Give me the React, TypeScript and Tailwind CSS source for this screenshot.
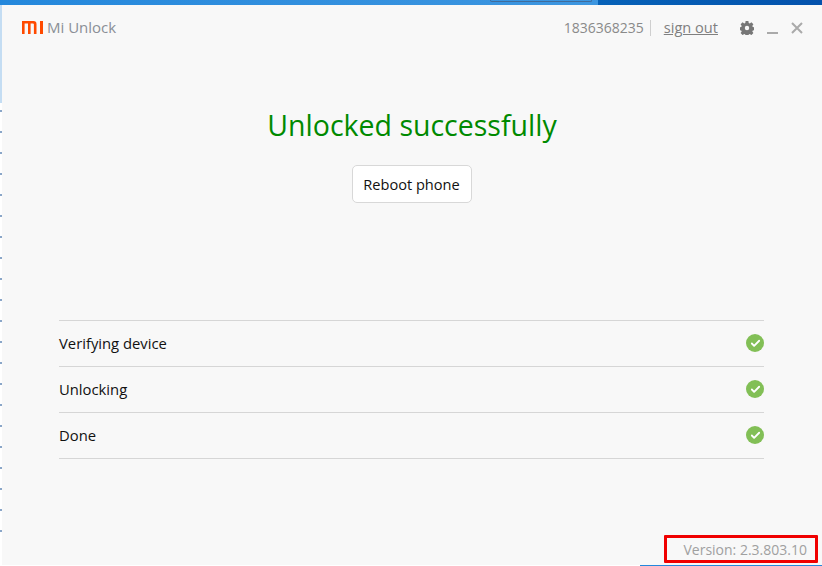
import { Check } from "lucide-react";

const steps = ["Verifying device", "Unlocking", "Done"];
const desktopIcons = [0, 1, 2, 3, 4, 5, 6, 7, 8, 9, 10, 11, 12, 13, 14, 15, 16, 17, 18, 19, 20];

function MiLogo() {
  return (
    <svg width="21" height="13" viewBox="0 0 21 13" className="shrink-0">
      <path
        fill="#ff4a00"
        d="M0 0h11.500a3 3 0 0 1 3 3v10h-2.600V3.600a1 1 0 0 0-1-1H8.600V13H6V2.600H2.600V13H0zM18 0h3v13h-3z"
      />
    </svg>
  );
}

function GearIcon() {
  return (
    <svg width="14" height="14" viewBox="0 0 14 14" className="shrink-0">
      <path
        fill="#777777"
        fillRule="evenodd"
        d="M5.600 0h2.800l.3 1.900 1.100.5L11.400 1.300l2 2-1.100 1.600.5 1.100 2 .3v2.800l-2 .3-.5 1.100 1.100 1.600-2 2-1.600-1.100-1.100.5-.3 2H5.600l-.3-2-1.100-.5-1.600 1.100-2-2 1.100-1.600-.5-1.100-2-.3V6.300l2-.3.5-1.100-1.100-1.600 2-2 1.600 1.100 1.100-.5zM7 4.800a2.200 2.200 0 1 0 0 4.400 2.200 2.200 0 0 0 0-4.400z"
      />
    </svg>
  );
}

function StepRow({ label }: { label: string }) {
  return (
    <div className="flex h-[46px] items-center justify-between border-b border-[#d6d6d6]">
      <span className="text-[14.8px] text-[#111111]">{label}</span>
      <span className="-mt-[1px] flex size-[18px] items-center justify-center rounded-full bg-[#82bf56]">
        <Check size={11} strokeWidth={4} color="#ffffff" />
      </span>
    </div>
  );
}

export default function App() {
  return (
    <div
      className="relative flex h-[566px] w-[822px] flex-col overflow-hidden bg-white"
      style={{ fontFamily: '"Open Sans", "Noto Sans", sans-serif' }}
    >
      {/* desktop peeking out above the window */}
      <div className="relative flex h-[5px] shrink-0">
        <div className="w-[598px] bg-gradient-to-r from-[#2488dc] to-[#3d96e0]" />
        <div className="flex-1 bg-gradient-to-r from-[#0762b8] to-[#0452ac]" />
        <div className="absolute left-[490px] top-0 h-[2px] w-[102px] rounded-b-[2px] border-b border-x border-[#3f6c9c]" />
      </div>

      <div className="flex min-h-0 flex-1">
        <div className="flex w-[2px] shrink-0 flex-col">
          <div className="h-[98px] shrink-0 bg-[#c4ddf3]" />
          <div className="flex flex-col pt-[7px]">
            {desktopIcons.map((i) => (
              <span key={i} className="mb-[19px] h-[2px] w-[2px] bg-[#8aa6c8]" />
            ))}
          </div>
        </div>

        <main className="flex min-w-0 flex-1 flex-col bg-[#f8f8f8]">
          <header className="flex h-[45px] shrink-0 items-center pl-[20px] pr-[19px]">
            <MiLogo />
            <span className="ml-[4px] text-[15px] text-[#8a8f96]">Mi Unlock</span>
            <span className="ml-auto text-[14px] text-[#8a8a8a]">1836368235</span>
            <span className="ml-[6px] h-[16px] w-px bg-[#cfcfcf]" />
            <a className="ml-[13px] text-[14.6px] text-[#808080] underline">sign out</a>
            <span className="ml-[22px] flex">
              <GearIcon />
            </span>
            <span className="ml-[13px] mt-[10px] h-[2px] w-[11px] bg-[#aaaaaa]" />
            <svg width="12" height="12" viewBox="0 0 12 12" className="ml-[13px]">
              <path d="M1 1l10 10M11 1L1 11" stroke="#aaaaaa" strokeWidth="2" />
            </svg>
          </header>

          <h1 className="mt-[50px] text-center text-[28.500px] leading-[50px] text-[#008a00]">
            Unlocked successfully
          </h1>

          <div className="mt-[15px] flex justify-center">
            <button className="h-[38px] w-[120px] rounded-[5px] border border-[#d8d8d8] bg-white pr-[1px] pt-[1px] text-[14.600px] text-[#111111]">
              Reboot phone
            </button>
          </div>

          <section className="ml-[57px] mr-[58px] mt-[117px] border-t border-[#d6d6d6]">
            {steps.map((step) => (
              <StepRow key={step} label={step} />
            ))}
          </section>

          <footer className="mt-auto flex justify-end pb-[5px] pr-[15px]">
            <span className="text-[14px] text-[#a0a0a0]">Version: 2.3.803.10</span>
          </footer>
        </main>
      </div>

      <div className="flex h-px shrink-0">
        <div className="w-[640px] bg-white" />
        <div className="flex-1 bg-[#2488dc]" />
      </div>

      <div className="absolute left-[664px] top-[535px] h-[28px] w-[154px] rounded-[1px] border-[3px] border-[#f00000]" />
    </div>
  );
}
